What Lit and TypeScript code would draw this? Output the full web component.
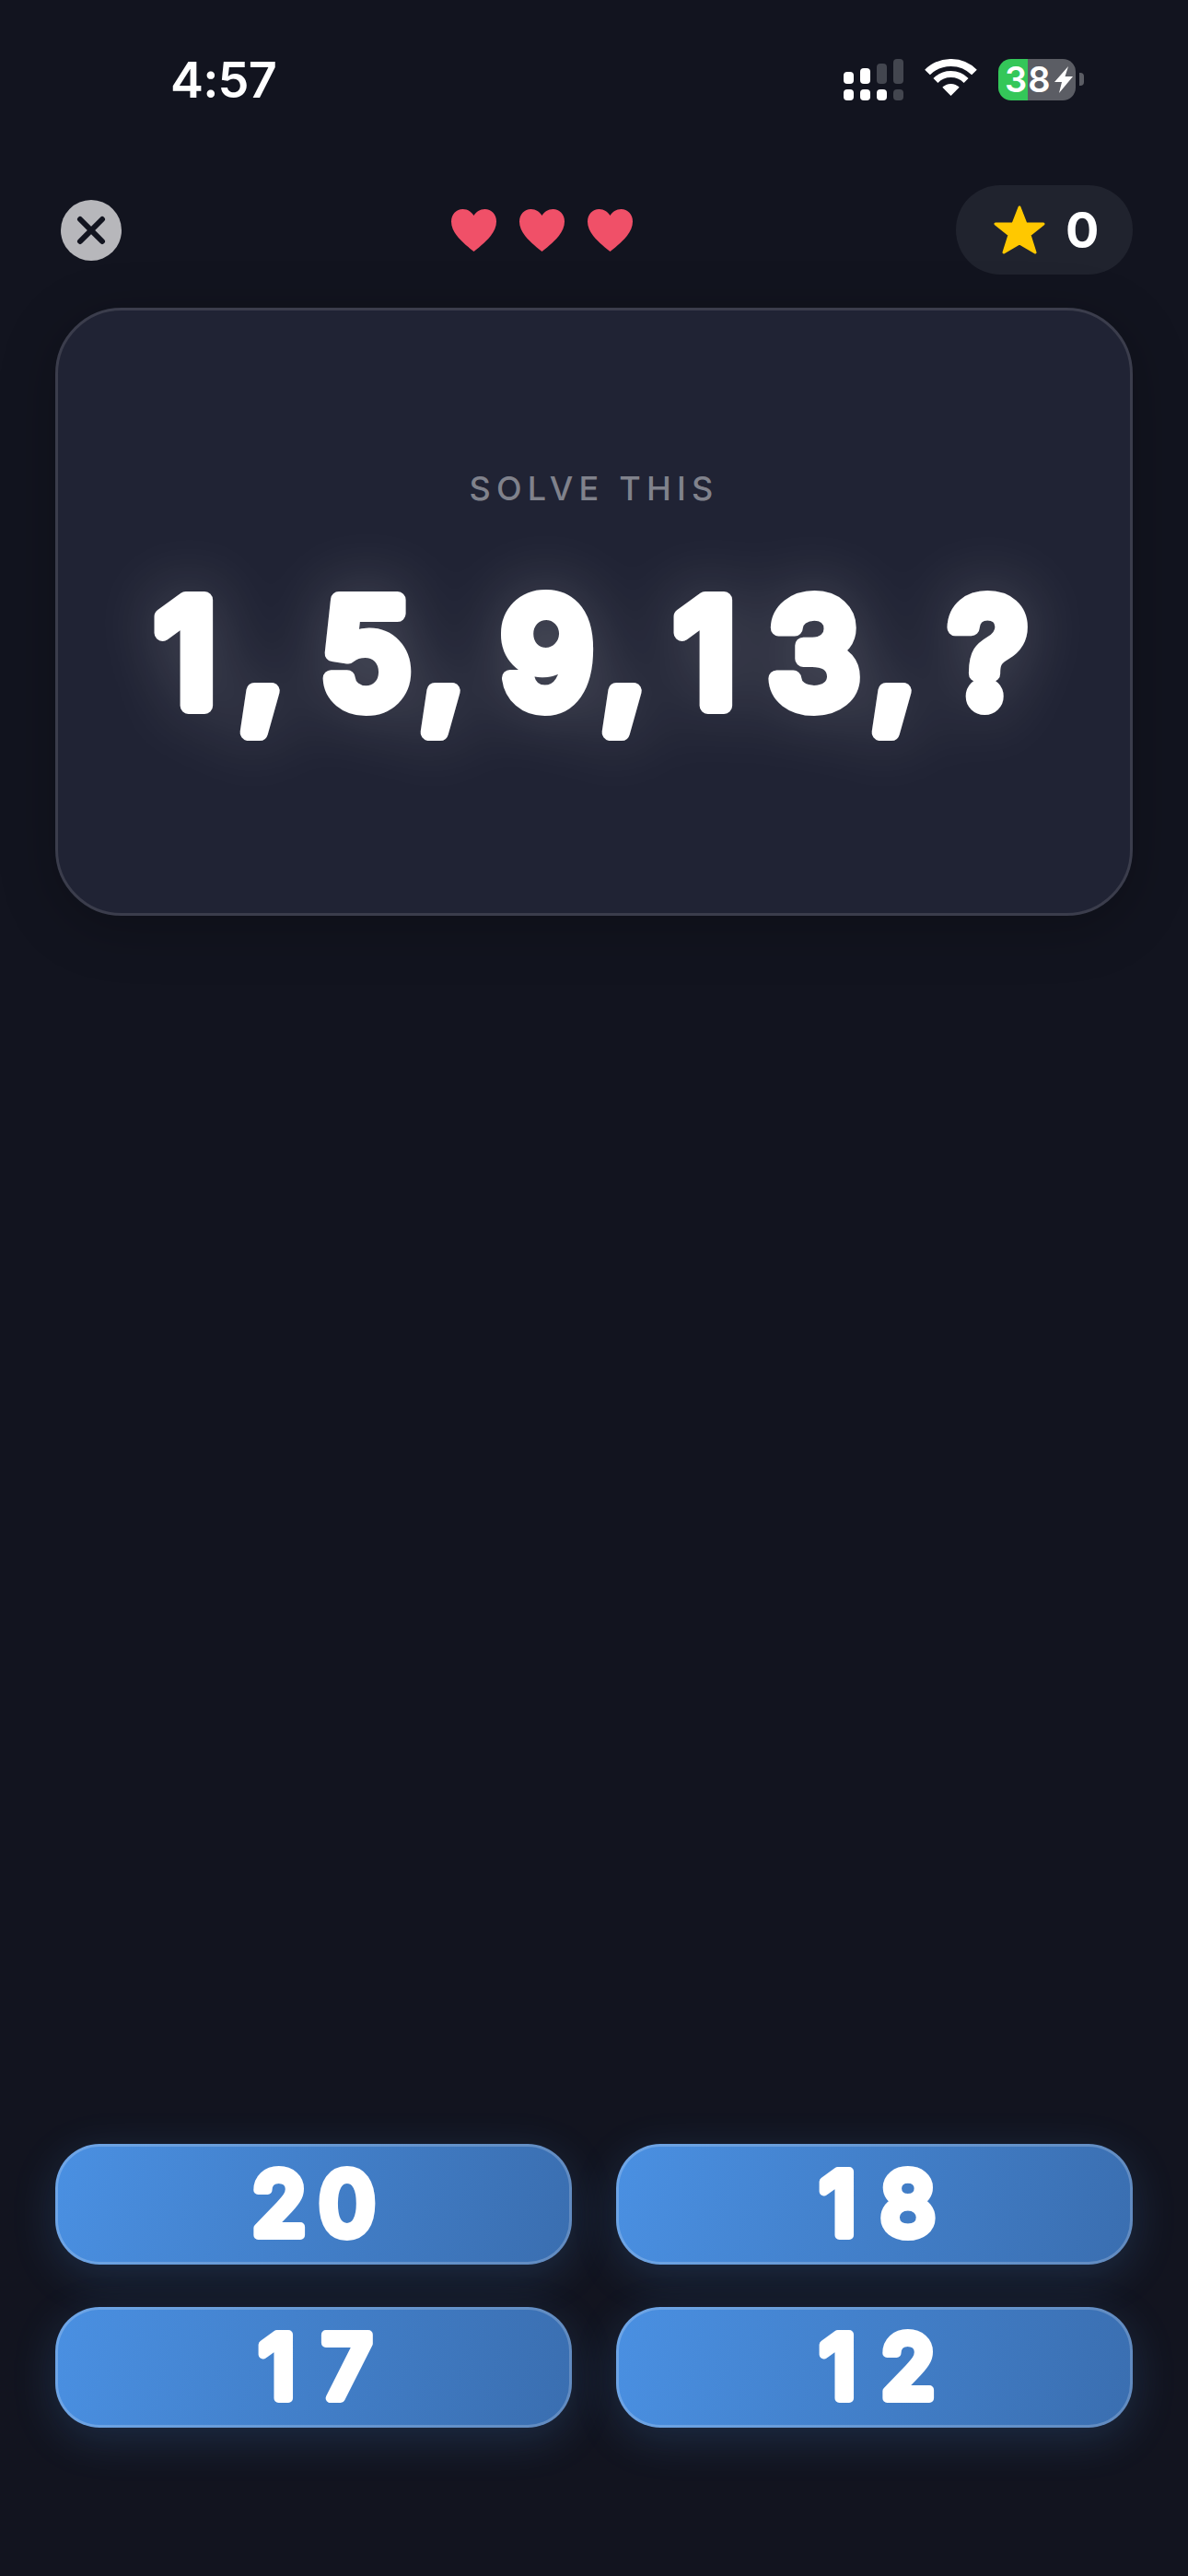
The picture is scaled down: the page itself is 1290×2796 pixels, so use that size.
import { LitElement, html, css, svg } from "lit";
import { customElement } from "lit/decorators.js";

const heart = html`<svg class="heart" viewBox="0 0 49 46"><path d="M24.5 46C12 36 0 26 0 13.5C0 5.5 5.5 0 12.5 0C18 0 22 3 24.5 7C27 3 31 0 36.5 0C43.5 0 49 5.5 49 13.5C49 26 37 36 24.5 46Z"/></svg>`;

const OPTIONS: { t: string; x: string }[] = [
  { t: "20", x: "112 186" },
  { t: "18", x: "110 186" },
  { t: "17", x: "110 186" },
  { t: "12", x: "110 186" },
];

@customElement("app-root")
export class AppRoot extends LitElement {
  static styles = css`
    :host {
      display: flex;
      flex-direction: column;
      width: 1290px;
      height: 2796px;
      background: #12141f;
      font-family: Inter, "Liberation Sans", sans-serif;
      color: #fff;
      overflow: hidden;
    }
    .status {
      display: flex;
      justify-content: space-between;
      align-items: flex-start;
      padding: 64px 113px 0 185px;
      height: 201px;
      box-sizing: border-box;
    }
    .time {
      font-size: 54px;
      font-weight: 600;
      line-height: 46px;
      letter-spacing: -0.8px;
    }
    .sys { display: flex; align-items: flex-start; }
    .signal {
      display: grid;
      grid-template-columns: repeat(4, 11px);
      grid-template-rows: 27px 12px;
      column-gap: 7px;
      row-gap: 6px;
      align-items: end;
      margin-right: 23px;
    }
    .signal i { display: block; background: #fff; border-radius: 4px; }
    .signal i.off { background: #43464f; }
    .wifi { width: 57px; height: 43px; margin-right: 23px; display: block; }
    .battery {
      display: flex;
      align-items: center;
      width: 84px;
      height: 45px;
      box-sizing: border-box;
      padding-left: 7px;
      border-radius: 14px;
      background: linear-gradient(90deg, #34c759 32px, #5b5d64 32px);
      font-size: 38px;
      font-weight: 600;
      letter-spacing: 1px;
      line-height: 45px;
    }
    .bolt { width: 20px; height: 29px; margin-left: 3px; display: block; flex: none; }
    .nub {
      width: 5px;
      height: 14px;
      margin: 15px 0 0 4px;
      background: #5b5d64;
      border-radius: 0 4px 4px 0;
    }
    .top {
      display: flex;
      justify-content: space-between;
      align-items: center;
      height: 97px;
      padding: 0 60px;
      margin-bottom: 36px;
    }
    .closewrap { width: 78px; display: flex; justify-content: center; }
    .close {
      width: 66px;
      height: 66px;
      border-radius: 50%;
      background: #b7b7bb;
      display: flex;
      align-items: center;
      justify-content: center;
    }
    .close svg { width: 34px; height: 34px; display: block; }
    .close path { stroke: #12141f; stroke-width: 6; stroke-linecap: round; fill: none; }
    .hearts { display: flex; gap: 25px; }
    .heart { width: 49px; height: 46px; display: block; fill: #f05068; }
    .pill {
      width: 192px;
      height: 97px;
      border-radius: 48px;
      background: #20232e;
      box-sizing: border-box;
      padding-left: 41px;
      display: flex;
      align-items: center;
    }
    .star { width: 56px; height: 54px; display: block; fill: #ffc800; stroke: #ffc800; stroke-width: 3; stroke-linejoin: round; }
    .score { font-size: 54px; font-weight: 700; margin-left: 22px; line-height: 54px; }
    .card {
      margin: 0 60px;
      height: 660px;
      box-sizing: border-box;
      border: 3px solid #3b3d4c;
      border-radius: 72px;
      background: #202334;
      box-shadow: 0 12px 60px rgba(0, 0, 0, 0.25);
      padding-top: 171px;
      display: flex;
      flex-direction: column;
      align-items: center;
    }
    .label {
      font-size: 36px;
      font-weight: 500;
      line-height: 44px;
      letter-spacing: 6.2px;
      color: #80828c;
    }
    .seq { display: block; width: 1164px; height: 200px; margin-top: 84px; overflow: visible; }
    .seq text {
      font-family: Inter, "Liberation Sans", sans-serif;
      font-size: 158px;
      font-weight: 500;
      fill: #fff;
      stroke: #fff;
      stroke-width: 18px;
      stroke-linejoin: round;
      text-anchor: middle;
      filter: drop-shadow(0 0 36px rgba(255, 255, 255, 0.22));
    }
    .spacer { flex: 1; }
    .grid {
      display: grid;
      grid-template-columns: 1fr 1fr;
      column-gap: 48px;
      row-gap: 46px;
      padding: 0 60px 161px;
    }
    .opt {
      height: 131px;
      box-sizing: border-box;
      border: 3px solid rgba(255, 255, 255, 0.2);
      border-radius: 48px;
      background: linear-gradient(105deg, #4a90e2, #3a6eb0) border-box;
      box-shadow: 0 12px 48px rgba(74, 144, 226, 0.2);
      display: flex;
      align-items: center;
      justify-content: center;
    }
    .opt svg { display: block; width: 300px; height: 125px; overflow: visible; }
    .opt text {
      font-family: Inter, "Liberation Sans", sans-serif;
      font-size: 95px;
      font-weight: 500;
      fill: #fff;
      stroke: #fff;
      stroke-width: 10px;
      stroke-linejoin: round;
      text-anchor: middle;
    }
  `;

  render() {
    const onBars = [true, true, false, false];
    const heights = [13, 17, 22, 27];
    const bottom = [true, true, true, false];
    return html`
      <div class="status">
        <div class="time">4:57</div>
        <div class="sys">
          <div class="signal">
            ${onBars.map((on, i) => html`<i class=${on ? "" : "off"} style="height:${heights[i]}px"></i>`)}
            ${bottom.map((on) => html`<i class=${on ? "" : "off"} style="height:12px"></i>`)}
          </div>
          <svg class="wifi" viewBox="0 0 57 43" fill="none" stroke="#fff">
            <path stroke-width="8" d="M3.04 14.54A36 36 0 0 1 53.96 14.54"/>
            <path stroke-width="7" d="M11.9 23.4A23.5 23.5 0 0 1 45.1 23.4"/>
            <path fill="#fff" stroke="none" d="M28.5 40L19.3 30.8A13 13 0 0 1 37.7 30.8Z"/>
          </svg>
          <div class="battery">
            <span>38</span>
            <svg class="bolt" viewBox="0 0 20 29"><path fill="#fff" d="M15 0L0 17H8L5 29L20 11H11.5Z"/></svg>
          </div>
          <div class="nub"></div>
        </div>
      </div>

      <div class="top">
        <div class="closewrap">
          <div class="close">
            <svg viewBox="0 0 34 34"><path d="M5 5L29 29M29 5L5 29"/></svg>
          </div>
        </div>
        <div class="hearts">${heart}${heart}${heart}</div>
        <div class="pill">
          <svg class="star" viewBox="0 0 56 54"><path d="M28 2L35 20H54L39 32L45 51L28 41L11 51L17 32L2 20H21Z"/></svg>
          <span class="score">0</span>
        </div>
      </div>

      <div class="card">
        <div class="label">SOLVE THIS</div>
        <svg class="seq" viewBox="0 0 1164 200">
          <text x="139 221 334 417 531 614 703 821 907 1010" y="130">1,5,9,13,?</text>
        </svg>
      </div>

      <div class="spacer"></div>

      <div class="grid">
        ${OPTIONS.map(
          (o) => html`<div class="opt">
            <svg viewBox="0 0 300 125">${svg`<text x=${o.x} y="96">${o.t}</text>`}</svg>
          </div>`
        )}
      </div>
    `;
  }
}
